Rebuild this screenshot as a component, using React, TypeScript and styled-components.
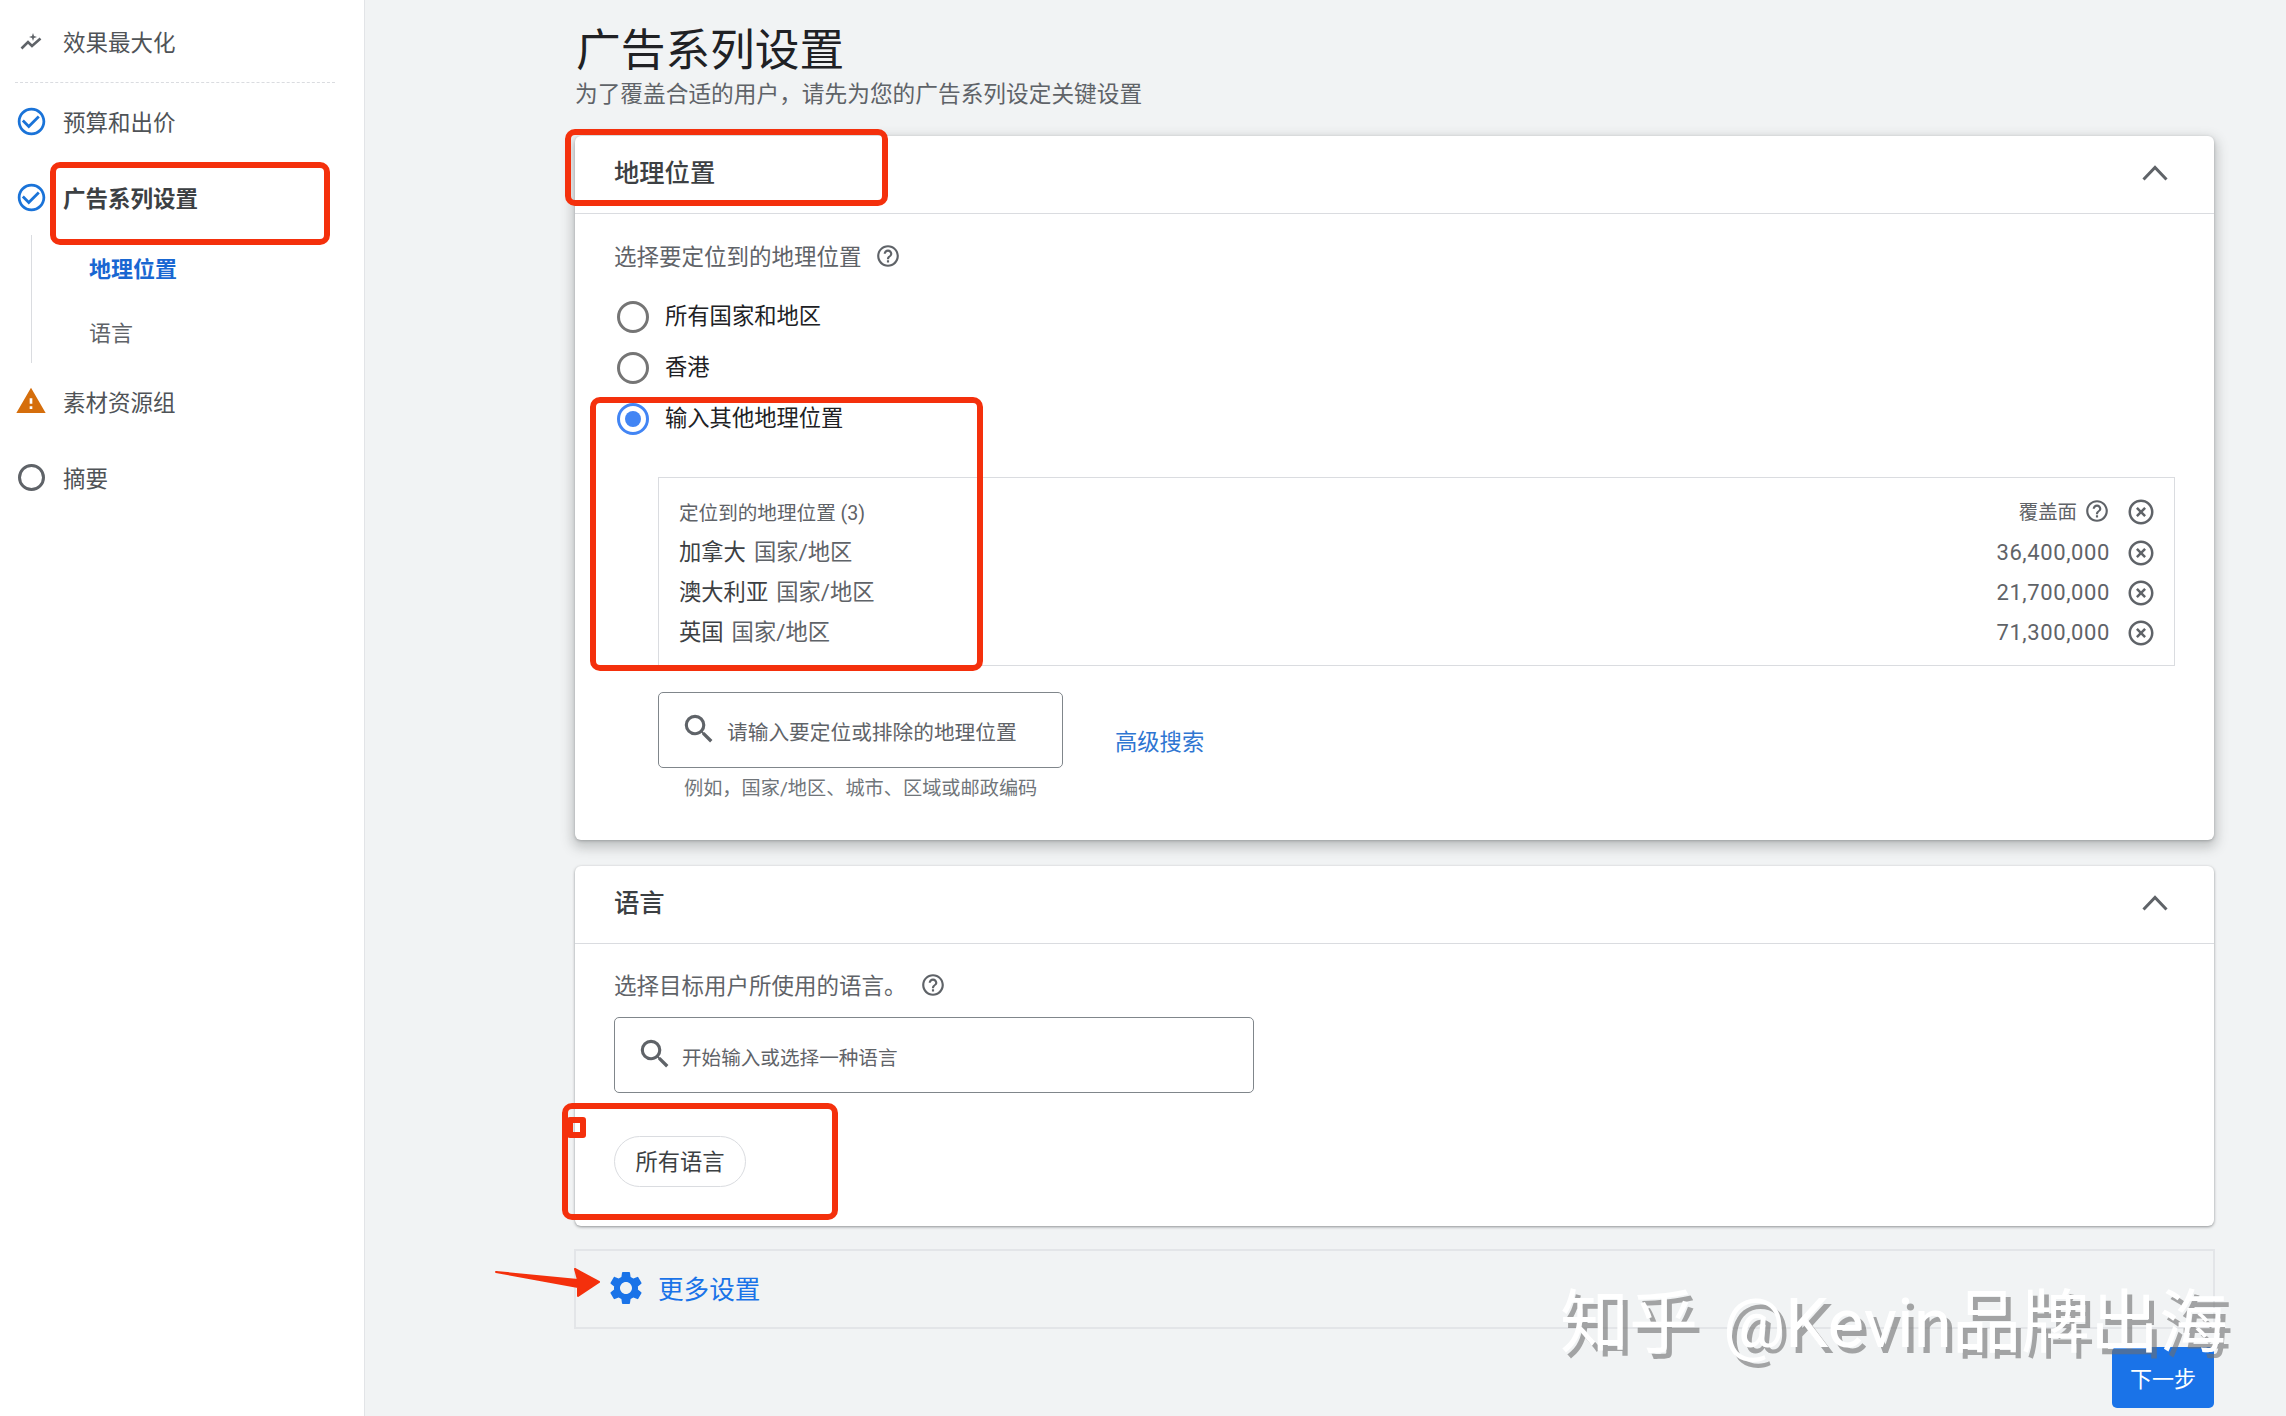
import React from "react";
import styled, { createGlobalStyle } from "styled-components";
import {
  MdCheckCircleOutline,
  MdHelpOutline,
  MdHighlightOff,
  MdSearch,
  MdSettings,
  MdWarning,
} from "react-icons/md";

const FONT = `Roboto, "Noto Sans CJK SC", "Liberation Sans", sans-serif`;

const GlobalStyle = createGlobalStyle`
  html, body {
    margin: 0;
    padding: 0;
    background: #f1f3f4;
    font-family: ${FONT};
    overflow: hidden;
  }
  * { box-sizing: border-box; }
`;

const Page = styled.div`
  position: relative;
  width: 2286px;
  height: 1416px;
  display: flex;
  overflow: hidden;
  background: #f1f3f4;
`;

/* sidebar */
const Sidebar = styled.nav`
  width: 365px;
  flex: none;
  height: 100%;
  background: #fff;
  border-right: 1px solid #e2e4e7;
  padding-top: 2px;
`;

const NavRow = styled.div<{ $top?: boolean }>`
  height: 76px;
  display: flex;
  align-items: center;
  gap: 18px;
  padding-left: 17px;
  font-size: 22.5px;
  color: #4f5357;
  ${(p) =>
    p.$top &&
    `
    height: 81px;
    margin-right: 29px;
    margin-left: 15px;
    padding-left: 2px;
    padding-bottom: 3px;
    border-bottom: 1px dashed #dadce0;
  `}
`;

const NavLabel = styled.span<{ $bold?: boolean }>`
  font-weight: ${(p) => (p.$bold ? 700 : 400)};
  color: ${(p) => (p.$bold ? "#3c4043" : "inherit")};
`;

const NavIcon = styled.span<{ $color?: string; $large?: boolean }>`
  width: 28px;
  height: 28px;
  flex: none;
  display: flex;
  align-items: center;
  justify-content: center;
  color: ${(p) => p.$color || "#5f6368"};
  font-size: ${(p) => (p.$large ? 32 : 33)}px;
  svg {
    flex: none;
  }
`;

const EmptyRing = styled.span`
  width: 27px;
  height: 27px;
  border-radius: 50%;
  border: 3px solid #5f6368;
`;

const SubList = styled.div`
  margin-left: 31px;
  padding-left: 57px;
  border-left: 1px solid #dadce0;
`;

const SubItem = styled.div<{ $active?: boolean }>`
  height: 64px;
  display: flex;
  align-items: center;
  font-size: 22px;
  font-weight: ${(p) => (p.$active ? 700 : 400)};
  color: ${(p) => (p.$active ? "#1967d2" : "#5f6368")};
`;

/* main column */
const Main = styled.main`
  flex: none;
  width: 1850px;
  padding-left: 210px;
`;

const Title = styled.h1`
  margin: 23px 0 -2px 1px;
  font-size: 44.7px;
  line-height: 56px;
  font-weight: 400;
  color: #202124;
`;

const Subtitle = styled.p`
  margin: 0;
  font-size: 22.7px;
  line-height: 36px;
  color: #5f6368;
`;

const Card = styled.section<{ $raised?: boolean }>`
  width: 1639px;
  background: #fff;
  border-radius: 6px;
  box-shadow: ${(p) =>
    p.$raised
      ? "0 5px 12px 3px rgba(60,64,67,.26), 0 1px 3px rgba(60,64,67,.3)"
      : "0 1px 3px rgba(60,64,67,.55)"};
`;

const LocationCard = styled(Card)`
  margin-top: 23px;
  height: 704px;
`;

const LanguageCard = styled(Card)`
  margin-top: 26px;
  height: 360px;
`;

const CardHeader = styled.header`
  height: 78px;
  display: flex;
  align-items: center;
  justify-content: space-between;
  padding: 0 46px 0 39px;
  border-bottom: 1px solid #dadce0;
`;

const CardTitle = styled.h2`
  margin: -7px 0 0;
  font-size: 25.3px;
  font-weight: 500;
  color: #3c4043;
`;

const Chevron = styled.svg`
  margin-top: -3px;
`;

const CardBody = styled.div`
  padding: 27px 39px 0;
`;

const FieldLabel = styled.div`
  height: 30px;
  display: flex;
  align-items: center;
  gap: 13px;
  font-size: 22.5px;
  color: #5f6368;
`;

const LabelText = styled.span`
  margin-top: -3px;
`;

const Help = styled(MdHelpOutline)`
  font-size: 26px;
  color: #5f6368;
  flex: none;
`;

const RadioGroup = styled.div`
  margin-top: 20px;
`;

const RadioRow = styled.div`
  height: 51px;
  display: flex;
  align-items: center;
  gap: 16px;
  padding-left: 3px;
  font-size: 22.3px;
  color: #202124;
`;

const RadioText = styled.span`
  margin-top: -5px;
`;

const Radio = styled.span<{ $on?: boolean }>`
  width: 32px;
  height: 32px;
  flex: none;
  border-radius: 50%;
  border: 3px solid ${(p) => (p.$on ? "#4285f4" : "#757575")};
  display: flex;
  align-items: center;
  justify-content: center;
  &::after {
    content: "";
    width: 16px;
    height: 16px;
    border-radius: 50%;
    background: ${(p) => (p.$on ? "#4285f4" : "transparent")};
  }
`;

const LocationBox = styled.div`
  margin: 33px 0 0 44px;
  width: 1517px;
  height: 189px;
  border: 1px solid #dadce0;
  padding: 15px 21px 0 20px;
`;

const LocationRow = styled.div<{ $head?: boolean }>`
  height: ${(p) => (p.$head ? 38 : 40)}px;
  display: flex;
  align-items: center;
  justify-content: space-between;
`;

const BoxHeading = styled.span`
  margin-top: -2px;
  font-size: 19.6px;
  color: #5f6368;
`;

const PlaceName = styled.span`
  margin-top: -3px;
  font-size: 22.3px;
  color: #3c4043;
`;

const PlaceType = styled.span`
  margin-left: 8px;
  color: #5f6368;
`;

const RowEnd = styled.div<{ $shift?: boolean }>`
  display: flex;
  align-items: center;
  margin-top: ${(p) => (p.$shift ? 3 : 0)}px;
`;

const Reach = styled.span`
  font-size: 22px;
  letter-spacing: 0.6px;
  color: #5f6368;
`;

const ReachHead = styled.span`
  margin: -3px 7px 0 0;
  font-size: 19.4px;
  color: #5f6368;
`;

const HeadHelp = styled(Help)`
  margin-top: -3px;
`;

const Remove = styled(MdHighlightOff)`
  font-size: 30px;
  color: #5f6368;
  margin: 0 -3px 0 16px;
`;

const SearchRow = styled.div`
  margin: 26px 0 0 44px;
  display: flex;
  align-items: flex-start;
`;

const SearchField = styled.div<{ $wide?: boolean }>`
  width: ${(p) => (p.$wide ? 640 : 405)}px;
  height: 76px;
  border: 1px solid #80868b;
  border-radius: 5px;
  display: flex;
  align-items: center;
  gap: ${(p) => (p.$wide ? 8 : 9)}px;
  padding-left: 21px;
  font-size: ${(p) => (p.$wide ? 19.6 : 20.7)}px;
  color: #5f6368;
`;

const SearchIcon = styled(MdSearch)`
  font-size: 38px;
  color: #5f6368;
  flex: none;
  margin-top: -3px;
`;

const SearchText = styled.span`
  margin-top: 2px;
`;

const AdvancedLink = styled.a`
  margin: 34px 0 0 52px;
  font-size: 22.3px;
  line-height: 32px;
  color: #2f76d2;
`;

const Hint = styled.div`
  margin: 7px 0 0 70px;
  font-size: 19.2px;
  line-height: 28px;
  color: #70757a;
`;

const LanguageBody = styled(CardBody)`
  padding-top: 26px;
`;

const LanguageSearch = styled.div`
  margin-top: 17px;
`;

const Chip = styled.div`
  margin-top: 43px;
  width: 132px;
  height: 51px;
  border: 1px solid #dadce0;
  border-radius: 26px;
  display: flex;
  align-items: center;
  justify-content: center;
  padding-bottom: 4px;
  font-size: 22.3px;
  color: #3c4043;
`;

const MoreSettings = styled.div`
  margin: 23px 0 0 -1px;
  width: 1641px;
  height: 80px;
  border: 2px solid #e3e5e8;
  display: flex;
  align-items: center;
  gap: 12px;
  padding: 0 0 3px 30px;
  font-size: 25.6px;
  color: #1a73e8;
`;

const Gear = styled(MdSettings)`
  font-size: 40px;
  flex: none;
`;

const Footer = styled.div`
  margin-top: 18px;
  width: 1639px;
  display: flex;
  justify-content: flex-end;
`;

const NextButton = styled.button`
  width: 102px;
  height: 61px;
  padding: 0 0 2px;
  border: none;
  border-radius: 5px;
  background: #1a73e8;
  color: #fff;
  font-family: ${FONT};
  font-size: 22px;
`;

/* screenshot markup on top of the page */
const RedBox = styled.div<{ $x: number; $y: number; $w: number; $h: number }>`
  position: absolute;
  left: ${(p) => p.$x}px;
  top: ${(p) => p.$y}px;
  width: ${(p) => p.$w}px;
  height: ${(p) => p.$h}px;
  border: 6px solid #f4300c;
  border-radius: 10px;
  pointer-events: none;
`;

const RedDot = styled.div`
  position: absolute;
  left: 567px;
  top: 1117px;
  width: 19px;
  height: 21px;
  border: 6px solid #f4300c;
  border-radius: 3px;
`;

const Arrow = styled.svg`
  position: absolute;
  left: 490px;
  top: 1260px;
`;

const Watermark = styled.div`
  position: absolute;
  left: 1560px;
  top: 1279px;
  font-size: 69px;
  line-height: 90px;
  word-spacing: 8px;
  white-space: nowrap;
  color: #fff;
  text-shadow: 5px 6px 0 rgba(110, 110, 110, 0.6);
`;

const TrendIcon = () => (
  <svg width="26" height="26" viewBox="0 0 26 26" fill="none">
    <path d="M3.5 20.5 L10 14 L14 18 L22.5 10.5" stroke="#5f6368" strokeWidth="2.6" />
    <path d="M15 5 L16 8 L19 9 L16 10 L15 13 L14 10 L11 9 L14 8 Z" fill="#5f6368" />
  </svg>
);

const ChevronUp = () => (
  <Chevron width="26" height="16" viewBox="0 0 26 16" fill="none">
    <path d="M1.5 14.5 L13 2.5 L24.5 14.5" stroke="#5f6368" strokeWidth="3" />
  </Chevron>
);

const places = [
  { name: "加拿大", reach: "36,400,000" },
  { name: "澳大利亚", reach: "21,700,000" },
  { name: "英国", reach: "71,300,000" },
];

const App = () => {
  return (
    <Page>
      <GlobalStyle />
      <Sidebar>
        <NavRow $top>
          <NavIcon>
            <TrendIcon />
          </NavIcon>
          <NavLabel>效果最大化</NavLabel>
        </NavRow>
        <NavRow>
          <NavIcon $color="#1a73d8">
            <MdCheckCircleOutline />
          </NavIcon>
          <NavLabel>预算和出价</NavLabel>
        </NavRow>
        <NavRow>
          <NavIcon $color="#1a73d8">
            <MdCheckCircleOutline />
          </NavIcon>
          <NavLabel $bold>广告系列设置</NavLabel>
        </NavRow>
        <SubList>
          <SubItem $active>地理位置</SubItem>
          <SubItem>语言</SubItem>
        </SubList>
        <NavRow>
          <NavIcon $color="#d56e0c" $large>
            <MdWarning />
          </NavIcon>
          <NavLabel>素材资源组</NavLabel>
        </NavRow>
        <NavRow>
          <NavIcon>
            <EmptyRing />
          </NavIcon>
          <NavLabel>摘要</NavLabel>
        </NavRow>
      </Sidebar>

      <Main>
        <Title>广告系列设置</Title>
        <Subtitle>为了覆盖合适的用户，请先为您的广告系列设定关键设置</Subtitle>

        <LocationCard $raised>
          <CardHeader>
            <CardTitle>地理位置</CardTitle>
            <ChevronUp />
          </CardHeader>
          <CardBody>
            <FieldLabel>
              <LabelText>选择要定位到的地理位置</LabelText>
              <Help />
            </FieldLabel>
            <RadioGroup>
              <RadioRow>
                <Radio />
                <RadioText>所有国家和地区</RadioText>
              </RadioRow>
              <RadioRow>
                <Radio />
                <RadioText>香港</RadioText>
              </RadioRow>
              <RadioRow>
                <Radio $on />
                <RadioText>输入其他地理位置</RadioText>
              </RadioRow>
            </RadioGroup>
            <LocationBox>
              <LocationRow $head>
                <BoxHeading>定位到的地理位置 (3)</BoxHeading>
                <RowEnd>
                  <ReachHead>覆盖面</ReachHead>
                  <HeadHelp />
                  <Remove />
                </RowEnd>
              </LocationRow>
              {places.map((place) => (
                <LocationRow key={place.name}>
                  <PlaceName>
                    {place.name}
                    <PlaceType>国家/地区</PlaceType>
                  </PlaceName>
                  <RowEnd $shift>
                    <Reach>{place.reach}</Reach>
                    <Remove />
                  </RowEnd>
                </LocationRow>
              ))}
            </LocationBox>
            <SearchRow>
              <SearchField>
                <SearchIcon />
                <SearchText>请输入要定位或排除的地理位置</SearchText>
              </SearchField>
              <AdvancedLink>高级搜索</AdvancedLink>
            </SearchRow>
            <Hint>例如，国家/地区、城市、区域或邮政编码</Hint>
          </CardBody>
        </LocationCard>

        <LanguageCard>
          <CardHeader>
            <CardTitle>语言</CardTitle>
            <ChevronUp />
          </CardHeader>
          <LanguageBody>
            <FieldLabel>
              <LabelText>选择目标用户所使用的语言。</LabelText>
              <Help />
            </FieldLabel>
            <LanguageSearch>
              <SearchField $wide>
                <SearchIcon />
                <SearchText>开始输入或选择一种语言</SearchText>
              </SearchField>
            </LanguageSearch>
            <Chip>所有语言</Chip>
          </LanguageBody>
        </LanguageCard>

        <MoreSettings>
          <Gear />
          更多设置
        </MoreSettings>

        <Footer>
          <NextButton>下一步</NextButton>
        </Footer>
      </Main>

      <RedBox $x={50} $y={162} $w={280} $h={83} />
      <RedBox $x={565} $y={129} $w={323} $h={77} />
      <RedBox $x={590} $y={397} $w={393} $h={274} />
      <RedBox $x={562} $y={1103} $w={276} $h={117} />
      <RedDot />
      <Arrow width="115" height="40" viewBox="0 0 115 40">
        <path d="M6 12 L88 20 L85 9 L109 22 L88 36 L88 27 Z" fill="#f4300c" stroke="#f4300c" strokeWidth="2" strokeLinejoin="round" />
      </Arrow>
      <Watermark>知乎 @Kevin品牌出海</Watermark>
    </Page>
  );
};

export default App;
